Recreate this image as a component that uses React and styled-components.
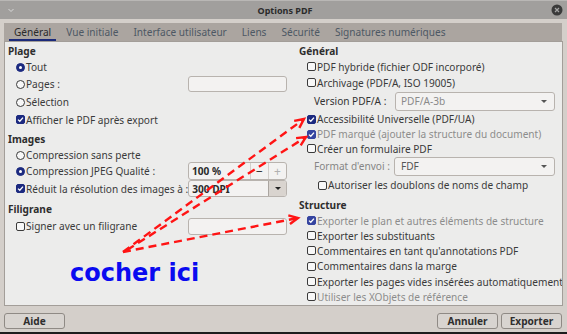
import React from "react";
import styled, { createGlobalStyle } from "styled-components";

const GlobalStyle = createGlobalStyle`
  html, body {
    margin: 0;
    padding: 0;
    background: #d4cfca;
  }
`;

const Window = styled.div`
  position: relative;
  width: 567px;
  height: 334px;
  box-sizing: border-box;
  background: #d4cfca;
  border-bottom: 2px solid #1c1c1c;
  display: flex;
  flex-direction: column;
  overflow: hidden;
  font-family: "Noto Sans", "Open Sans", sans-serif;
  font-size: 10.1px;
  color: #3c3c3c;
`;

const TitleBar = styled.div`
  flex: none;
  height: 19px;
  box-sizing: border-box;
  background: #a19f9d;
  border-top: 1px solid #b9b7b5;
  display: grid;
  grid-template-columns: 1fr auto 1fr;
  align-items: center;
  padding: 0 4px 0 7px;
`;

const Title = styled.div`
  font-weight: bold;
  font-size: 9px;
  color: #2b2b2b;
`;

const TitleRight = styled.div`
  display: flex;
  justify-content: flex-end;
`;

const TabStrip = styled.div`
  flex: none;
  margin: 4px 5px 0 4px;
  height: 18px;
  background: #aba5a0;
  display: flex;
  padding-left: 5px;
`;

const Tab = styled.div`
  padding: 1px 5px 0;
  margin-right: 5px;
  display: flex;
  align-items: center;
  box-sizing: border-box;
  border-bottom: 2px solid ${(p) => (p.$active ? "#1b2a7a" : "transparent")};
  color: ${(p) => (p.$active ? "#2a2a2a" : "#4d5864")};
  white-space: nowrap;
`;

const Panel = styled.div`
  flex: none;
  margin: 0 4px;
  height: 265px;
  box-sizing: border-box;
  border: 1px solid #a39e99;
  background: #ececeb;
  display: grid;
  grid-template-columns: 288px minmax(0, 1fr);
  overflow: hidden;
`;

const Column = styled.div`
  display: flex;
  flex-direction: column;
  min-width: 0;
  padding: ${(p) => (p.$right ? "0 7px 0 6px" : "0 6px 0 3px")};
`;

const Heading = styled.div`
  height: ${(p) => p.$h}px;
  box-sizing: border-box;
  padding-top: ${(p) => p.$top || 0}px;
  display: flex;
  align-items: center;
  font-weight: bold;
  color: #2e2e2e;
`;

const Row = styled.div`
  height: ${(p) => p.$h}px;
  display: flex;
  align-items: center;
  padding-left: ${(p) => p.$indent || 8}px;
  color: ${(p) => (p.$dim ? "#8c8c8c" : "#3a3a3a")};
  white-space: nowrap;
`;

const Check = styled.span`
  flex: none;
  width: 9px;
  height: 9px;
  box-sizing: border-box;
  margin-right: 1px;
  border-radius: 2px;
  border: 1px solid ${(p) => (p.$on ? (p.$dim ? "#3544a0" : "#1c2a80") : "#3a3a3a")};
  background: ${(p) => (p.$on ? (p.$dim ? "#3544a0" : "#1c2a80") : "#f8f8f8")};
  display: flex;
  align-items: center;
  justify-content: center;
`;

const Radio = styled.span`
  flex: none;
  width: 9px;
  height: 9px;
  box-sizing: border-box;
  margin-right: 1px;
  border-radius: 50%;
  border: 1px solid ${(p) => (p.$on ? "#1c2a80" : "#3a3a3a")};
  background: ${(p) => (p.$on ? "#1c2a80" : "#f8f8f8")};
  display: flex;
  align-items: center;
  justify-content: center;

  &::after {
    content: "";
    display: ${(p) => (p.$on ? "block" : "none")};
    width: 3px;
    height: 3px;
    border-radius: 50%;
    background: #fff;
  }
`;

const Field = styled.div`
  margin-left: auto;
  flex: none;
  width: ${(p) => p.$w}px;
  height: ${(p) => p.$fh}px;
  box-sizing: border-box;
  border: 1px solid #b8b3ae;
  border-radius: 3px;
  background: #f3f2f1;
  display: flex;
  align-items: stretch;
  overflow: hidden;
`;

const FieldText = styled.div`
  flex: 1;
  display: flex;
  align-items: center;
  padding-left: ${(p) => p.$pad || 3}px;
  font-weight: ${(p) => (p.$bold ? "bold" : "normal")};
  color: ${(p) => p.$color || "#2a2a2a"};
`;

const SpinButton = styled.div`
  width: 17px;
  border-left: 1px solid #d3cfcb;
  display: flex;
  align-items: center;
  justify-content: center;
  font-size: 12px;
  color: ${(p) => (p.$dim ? "#b0b0b0" : "#2a2a2a")};
`;

const DropButton = styled.div`
  width: ${(p) => (p.$boxed ? 17 : 20)}px;
  border-left: ${(p) => (p.$boxed ? "1px solid #aaa5a0" : "none")};
  background: ${(p) => (p.$boxed ? "#d9d4cf" : "transparent")};
  display: flex;
  align-items: center;
  justify-content: center;

  &::after {
    content: "";
    border-left: 3px solid transparent;
    border-right: 3px solid transparent;
    border-top: 3px solid ${(p) => (p.$boxed ? "#222" : "#555")};
  }
`;

const Label = styled.span`
  color: ${(p) => (p.$dim ? "#858585" : "#333")};
`;

const Footer = styled.div`
  flex: 1;
  display: flex;
  align-items: flex-start;
  padding: 7px 5px 0 4px;
  gap: 3px;
`;

const Button = styled.div`
  width: 61px;
  height: 16px;
  box-sizing: border-box;
  border: 1px solid #8f8a85;
  border-radius: 3px;
  background: #d8d4d0;
  display: flex;
  align-items: center;
  justify-content: center;
  font-weight: bold;
  color: #2e2e2e;
  margin-left: ${(p) => (p.$push ? "auto" : "0")};
`;

const Overlay = styled.svg`
  position: absolute;
  left: 0;
  top: 0;
  pointer-events: none;
`;

const Note = styled.span`
  position: absolute;
  left: 70px;
  top: 261px;
  font-family: "DejaVu Sans", sans-serif;
  font-weight: bold;
  font-size: 24px;
  line-height: 1;
  color: #0a0af0;
  white-space: nowrap;
`;

const Tick = () => (
  <svg width="7" height="7" viewBox="0 0 7 7">
    <polyline points="1,3.6 2.8,5.3 6,1.6" fill="none" stroke="#fff" strokeWidth="1.3" />
  </svg>
);

const CheckRow = ({ on, dim, h, indent, children }) => (
  <Row $h={h} $indent={indent} $dim={dim}>
    <Check $on={on} $dim={dim}>{on && <Tick />}</Check>
    {children}
  </Row>
);

const RadioRow = ({ on, h, children }) => (
  <Row $h={h}>
    <Radio $on={on} />
    {children}
  </Row>
);

const arrows = [
  { from: [123, 252], to: [304, 119] },
  { from: [127, 250], to: [306, 137] },
  { from: [123, 252], to: [298, 218] },
];

const head = ({ from, to }) => {
  const dx = to[0] - from[0];
  const dy = to[1] - from[1];
  const len = Math.hypot(dx, dy);
  const ux = dx / len;
  const uy = dy / len;
  const pt = (a) => {
    const c = Math.cos(a);
    const s = Math.sin(a);
    const rx = ux * c - uy * s;
    const ry = ux * s + uy * c;
    return `${to[0] - rx * 10},${to[1] - ry * 10}`;
  };
  return `${pt(0.45)} ${to[0]},${to[1]} ${pt(-0.45)}`;
};

export default function App() {
  return (
    <>
      <GlobalStyle />
      <Window>
        <TitleBar>
          <svg width="8" height="6" viewBox="0 0 8 6">
            <polyline points="1.5,2 4,4.5 6.5,2" fill="none" stroke="#d9d9d9" strokeWidth="1" />
          </svg>
          <Title>Options PDF</Title>
          <TitleRight>
            <svg width="12" height="12" viewBox="0 0 12 12">
              <circle cx="6" cy="6" r="5.5" fill="#3a3a3a" />
              <path d="M4 4 L8 8 M8 4 L4 8" stroke="#a5a5a5" strokeWidth="1.2" />
            </svg>
          </TitleRight>
        </TitleBar>

        <TabStrip>
          <Tab $active>Général</Tab>
          <Tab>Vue initiale</Tab>
          <Tab>Interface utilisateur</Tab>
          <Tab>Liens</Tab>
          <Tab>Sécurité</Tab>
          <Tab>Signatures numériques</Tab>
        </TabStrip>

        <Panel>
          <Column>
            <Heading $h={17}>Plage</Heading>
            <RadioRow on h={16}>Tout</RadioRow>
            <Row $h={18}>
              <Radio />
              Pages :
              <Field $w={99} $fh={16} />
            </Row>
            <RadioRow h={18}>Sélection</RadioRow>
            <CheckRow on h={17}>Afficher le PDF après export</CheckRow>
            <Heading $h={20} $top={2}>Images</Heading>
            <RadioRow h={14}>Compression sans perte</RadioRow>
            <Row $h={18}>
              <Radio $on />
              Compression JPEG Qualité :
              <Field $w={99} $fh={18}>
                <FieldText $bold>100 %</FieldText>
                <SpinButton>−</SpinButton>
                <SpinButton $dim>+</SpinButton>
              </Field>
            </Row>
            <Row $h={17}>
              <Check $on><Tick /></Check>
              Réduit la résolution des images à :
              <Field $w={99} $fh={17}>
                <FieldText $bold>300 DPI</FieldText>
                <DropButton $boxed />
              </Field>
            </Row>
            <Heading $h={20} $top={4}>Filigrane</Heading>
            <Row $h={18}>
              <Check />
              Signer avec un filigrane
              <Field $w={99} $fh={17} />
            </Row>
          </Column>

          <Column $right>
            <Heading $h={17}>Général</Heading>
            <CheckRow h={15}>PDF hybride (fichier ODF incorporé)</CheckRow>
            <CheckRow h={17}>Archivage (PDF/A, ISO 19005)</CheckRow>
            <Row $h={20} $indent={15}>
              <Label>Version PDF/A :</Label>
              <Field $w={160} $fh={19}>
                <FieldText $color="#8a8a8a" $pad={5}>PDF/A-3b</FieldText>
                <DropButton />
              </Field>
            </Row>
            <CheckRow on h={16}>Accessibilité Universelle (PDF/UA)</CheckRow>
            <CheckRow on dim h={14}>PDF marqué (ajouter la structure du document)</CheckRow>
            <CheckRow h={15}>Créer un formulaire PDF</CheckRow>
            <Row $h={20} $indent={15}>
              <Label $dim>Format d'envoi :</Label>
              <Field $w={161} $fh={19}>
                <FieldText $color="#555" $pad={6}>FDF</FieldText>
                <DropButton />
              </Field>
            </Row>
            <CheckRow h={18} indent={19}>Autoriser les doublons de noms de champ</CheckRow>
            <Heading $h={19} $top={2}>Structure</Heading>
            <CheckRow on dim h={15}>Exporter le plan et autres éléments de structure</CheckRow>
            <CheckRow h={15}>Exporter les substituants</CheckRow>
            <CheckRow h={15}>Commentaires en tant qu'annotations PDF</CheckRow>
            <CheckRow h={16}>Commentaires dans la marge</CheckRow>
            <CheckRow h={15}>Exporter les pages vides insérées automatiquement</CheckRow>
            <CheckRow dim h={15}>Utiliser les XObjets de référence</CheckRow>
          </Column>
        </Panel>

        <Footer>
          <Button>Aide</Button>
          <Button $push>Annuler</Button>
          <Button>Exporter</Button>
        </Footer>

        <Overlay width="567" height="334" viewBox="0 0 567 334">
          {arrows.map((a, i) => (
            <g key={i} fill="none" stroke="#ff1414" strokeWidth="2.4">
              <line x1={a.from[0]} y1={a.from[1]} x2={a.to[0]} y2={a.to[1]} strokeDasharray="8 5" />
              <polyline points={head(a)} strokeLinejoin="miter" />
            </g>
          ))}
        </Overlay>
        <Note>cocher ici</Note>
      </Window>
    </>
  );
}
